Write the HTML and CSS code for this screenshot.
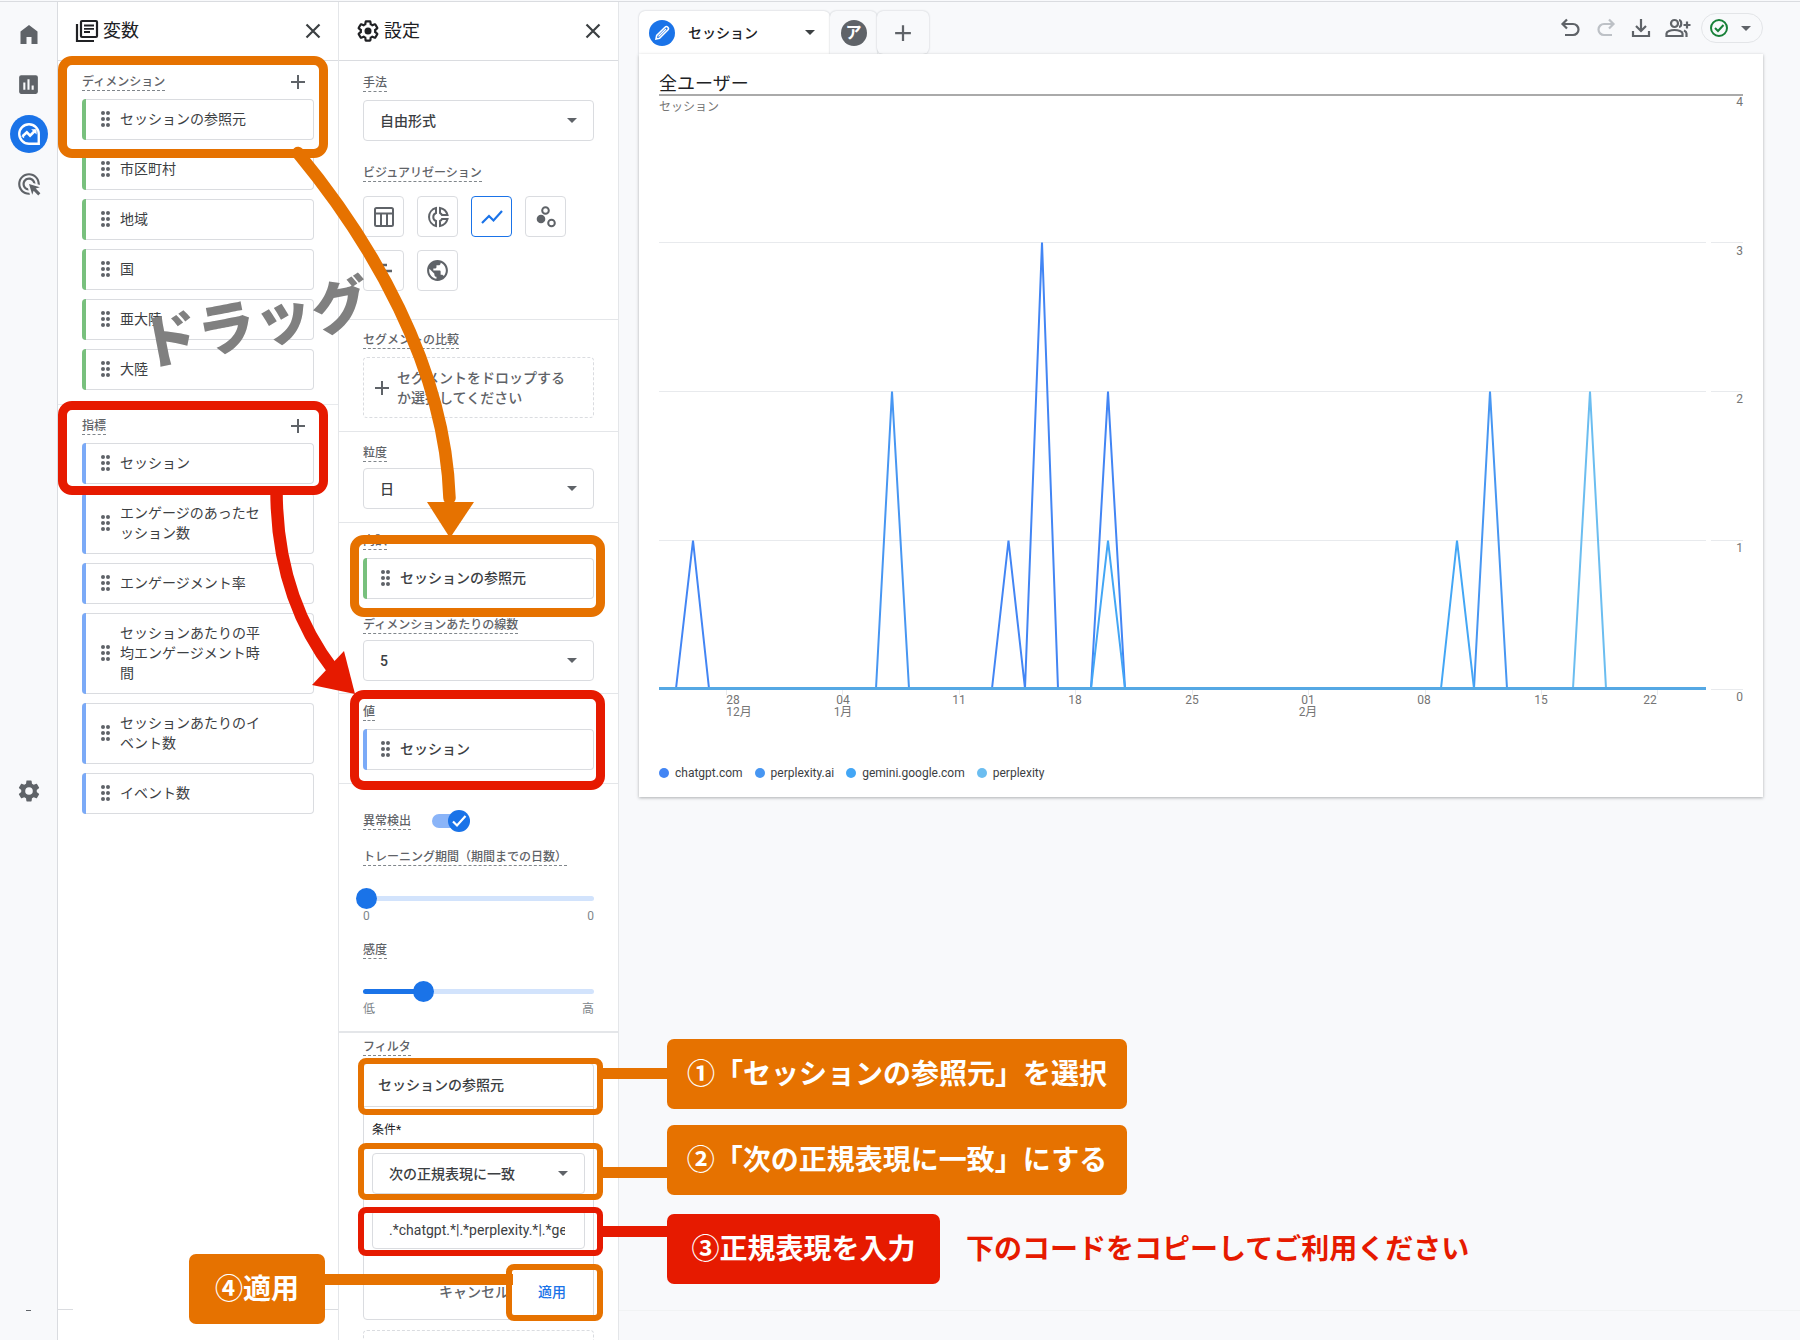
FILE: index.html
```html
<!DOCTYPE html>
<html lang="ja">
<head>
<meta charset="utf-8">
<title>データ探索</title>
<link rel="stylesheet" href="styles.css">
</head>
<body>
<svg class="defs" aria-hidden="true">
  <symbol id="grip" viewBox="0 0 10 16"><g fill="#5f6368"><circle cx="2" cy="2" r="2"/><circle cx="7" cy="2" r="2"/><circle cx="2" cy="8" r="2"/><circle cx="7" cy="8" r="2"/><circle cx="2" cy="14" r="2"/><circle cx="7" cy="14" r="2"/></g></symbol>
  <symbol id="plus" viewBox="0 0 16 16"><path d="M8 1v14M1 8h14" stroke="#5f6368" stroke-width="2" fill="none"/></symbol>
  <symbol id="close" viewBox="0 0 16 16"><path d="M1.500 1.500l13 13M14.500 1.500l-13 13" stroke="#3c4043" stroke-width="2.200" fill="none"/></symbol>
  <symbol id="gear" viewBox="0 0 24 24"><path d="M19.140 12.940c.04-.3.06-.61.06-.94 0-.32-.02-.64-.07-.94l2.030-1.580a.49.49 0 0 0 .12-.61l-1.920-3.320a.488.488 0 0 0-.59-.22l-2.390.96c-.5-.38-1.030-.7-1.620-.94l-.36-2.540a.484.484 0 0 0-.48-.41h-3.840c-.24 0-.43.17-.47.41l-.36 2.540c-.59.24-1.130.57-1.620.94l-2.390-.96c-.22-.08-.47 0-.59.22L2.740 8.870c-.12.21-.08.47.12.61l2.030 1.580c-.05.3-.09.63-.09.94s.02.64.07.94l-2.030 1.580a.49.49 0 0 0-.12.61l1.920 3.320c.12.22.37.29.59.22l2.390-.96c.5.38 1.030.7 1.620.94l.36 2.540c.05.24.24.41.48.41h3.840c.24 0 .44-.17.47-.41l.36-2.540c.59-.24 1.130-.56 1.620-.94l2.390.96c.22.08.47 0 .59-.22l1.920-3.320c.12-.22.07-.47-.12-.61z"/></symbol>
</svg>
<div class="page">
  <nav class="rail" aria-label="メイン">
    <a href="#home" class="rail-link" aria-label="ホーム"><svg width="24" height="24" viewBox="0 0 24 24"><path fill="#5f6368" d="M3.500 22V9.500L12 3l8.500 6.500V22h-6v-7h-5v7z"/></svg></a>
    <a href="#reports" class="rail-link" aria-label="レポート"><svg width="25" height="25" viewBox="0 0 24 24"><path fill="#5f6368" fill-rule="evenodd" d="M19 3H5a2 2 0 0 0-2 2v14c0 1.100.9 2 2 2h14a2 2 0 0 0 2-2V5a2 2 0 0 0-2-2zM9 17H7v-7h2zm4 0h-2V7h2zm4 0h-2v-4h2z"/></svg></a>
    <a href="#explore" class="rail-link rail-current" aria-label="探索"><svg width="26" height="26" viewBox="0 0 24 24" fill="none" stroke="#fff"><path stroke-width="2.200" d="M12 3a9 9 0 1 0 0 18h9v-9a9 9 0 0 0-9-9z"/><path stroke-width="2.400" d="M6 14l4-3.500 3 3L18 8.500"/><path fill="#fff" stroke="none" d="M14 7.500h5v5zM4.500 14h3v2z"/></svg></a>
    <a href="#ads" class="rail-link" aria-label="広告"><svg width="26" height="26" viewBox="0 0 24 24"><path fill="#5f6368" d="M11.710 17.990C8.530 17.840 6 15.220 6 12c0-3.310 2.690-6 6-6 3.220 0 5.840 2.530 5.990 5.710l-2.100-.63C15.480 9.310 13.890 8 12 8c-2.210 0-4 1.790-4 4 0 1.890 1.310 3.480 3.080 3.890l.63 2.100zM22 12c0 .3-.01.6-.04.9l-1.970-.59c.01-.1.01-.21.01-.31 0-4.420-3.580-8-8-8s-8 3.580-8 8 3.580 8 8 8c.1 0 .21 0 .31-.01l.59 1.970c-.3.030-.6.040-.9.040-5.520 0-10-4.480-10-10S6.480 2 12 2s10 4.480 10 10zm-3.770 4.260L22 15l-10-3 3 10 1.260-3.770 4.270 4.270 1.980-1.980-4.280-4.260z"/></svg></a>
    <a href="#admin" class="rail-link rail-admin" aria-label="管理"><svg width="26" height="26" viewBox="0 0 24 24" fill="#5f6368"><use href="#gear"/><circle cx="12" cy="12" r="3.500" fill="#f8f9fb"/></svg></a>
    <span class="rail-dash"></span>
  </nav>

  <section class="panel panel-vars" aria-label="変数">
    <header class="panel-head">
      <svg width="24" height="24" viewBox="0 0 24 24" fill="none" stroke="#202124" stroke-width="2.200"><path d="M2 5v17h17"/><rect x="6" y="2" width="16" height="16" rx="1"/><path stroke-width="1.800" d="M9 6.500h10M9 9.800h10M9 13h6"/></svg>
      <h2>変数</h2>
      <button class="icon-btn" aria-label="変数を閉じる"><svg width="16" height="16"><use href="#close"/></svg></button>
    </header>
    <div class="vars-group">
      <div class="group-head"><span class="label">ディメンション</span><button class="icon-btn" aria-label="ディメンションを追加"><svg width="16" height="16"><use href="#plus"/></svg></button></div>
      <ul class="chips">
        <li class="chip dim"><svg class="grip"><use href="#grip"/></svg><span>セッションの参照元</span></li>
        <li class="chip dim"><svg class="grip"><use href="#grip"/></svg><span>市区町村</span></li>
        <li class="chip dim"><svg class="grip"><use href="#grip"/></svg><span>地域</span></li>
        <li class="chip dim"><svg class="grip"><use href="#grip"/></svg><span>国</span></li>
        <li class="chip dim"><svg class="grip"><use href="#grip"/></svg><span>亜大陸</span></li>
        <li class="chip dim"><svg class="grip"><use href="#grip"/></svg><span>大陸</span></li>
      </ul>
    </div>
    <div class="vars-group">
      <div class="group-head"><span class="label">指標</span><button class="icon-btn" aria-label="指標を追加"><svg width="16" height="16"><use href="#plus"/></svg></button></div>
      <ul class="chips">
        <li class="chip met"><svg class="grip"><use href="#grip"/></svg><span>セッション</span></li>
        <li class="chip met"><svg class="grip"><use href="#grip"/></svg><span>エンゲージのあったセッション数</span></li>
        <li class="chip met"><svg class="grip"><use href="#grip"/></svg><span>エンゲージメント率</span></li>
        <li class="chip met"><svg class="grip"><use href="#grip"/></svg><span>セッションあたりの平均エンゲージメント時間</span></li>
        <li class="chip met"><svg class="grip"><use href="#grip"/></svg><span>セッションあたりのイベント数</span></li>
        <li class="chip met"><svg class="grip"><use href="#grip"/></svg><span>イベント数</span></li>
      </ul>
    </div>
    <div class="vars-foot"><span></span><span></span></div>
  </section>

  <section class="panel panel-settings" aria-label="設定">
    <header class="panel-head">
      <svg width="24" height="24" viewBox="0 0 24 24" fill="none" stroke="#202124" stroke-width="2.200"><use href="#gear"/><circle cx="12" cy="12" r="3.500" fill="#202124" stroke="none"/></svg>
      <h2>設定</h2>
      <button class="icon-btn" aria-label="設定を閉じる"><svg width="16" height="16"><use href="#close"/></svg></button>
    </header>

    <div class="sec sec-method">
      <label class="label" for="method">手法</label>
      <div class="select"><select id="method"><option>自由形式</option></select></div>
      <span class="label label-viz">ビジュアリゼーション</span>
      <div class="viz">
        <button aria-label="表"><svg width="22" height="22" viewBox="0 0 22 22" fill="none" stroke="#5f6368" stroke-width="2"><rect x="2" y="2" width="18" height="18" rx="1.500"/><path d="M2 7.500h18M8 7.500V20M14 7.500V20"/></svg></button>
        <button aria-label="ドーナツ グラフ"><svg width="22" height="22" viewBox="0 0 22 22" fill="none" stroke="#5f6368" stroke-width="2"><path d="M9 2a9.300 9.300 0 0 0 0 18v-5a4.300 4.300 0 0 1 0-8zM13 2v5a4.500 4.500 0 0 1 2 2h5.500A9.500 9.500 0 0 0 13 2zM13 20v-5a4.500 4.500 0 0 0 2-2h5.500A9.500 9.500 0 0 1 13 20z"/></svg></button>
        <button class="on" aria-label="折れ線グラフ"><svg width="22" height="22" viewBox="0 0 22 22" fill="none" stroke="#1a73e8" stroke-width="2.200"><path d="M1 17l7-7 4.500 4.500L21 5"/></svg></button>
        <button aria-label="散布図"><svg width="22" height="22" viewBox="0 0 22 22" fill="none" stroke="#5f6368" stroke-width="2"><circle cx="10.500" cy="4.500" r="3.300"/><circle cx="16.500" cy="17" r="3.300"/><circle cx="6" cy="13" r="4.300" fill="#5f6368" stroke="none"/></svg></button>
        <button aria-label="棒グラフ"><svg width="22" height="22" viewBox="0 0 22 22" fill="none" stroke="#5f6368" stroke-width="2.400"><path d="M9 5h5M9 11h10M9 17h3"/></svg></button>
        <button aria-label="地図"><svg width="25" height="25" viewBox="0 0 24 24" fill="#5f6368"><path d="M12 2C6.480 2 2 6.480 2 12s4.480 10 10 10 10-4.480 10-10S17.520 2 12 2zm-1 17.930c-3.950-.49-7-3.850-7-7.930 0-.62.08-1.210.21-1.790L9 15v1c0 1.100.9 2 2 2v1.930zm6.900-2.540c-.26-.81-1-1.390-1.900-1.390h-1v-3c0-.55-.45-1-1-1H8v-2h2c.55 0 1-.45 1-1V7h2c1.100 0 2-.9 2-2v-.41c2.930 1.190 5 4.060 5 7.410 0 2.080-.8 3.970-2.100 5.390z"/></svg></button>
      </div>
    </div>

    <div class="sec sec-segment">
      <span class="label">セグメントの比較</span>
      <button class="drop"><svg width="16" height="16"><use href="#plus"/></svg><span>セグメントをドロップするか選択してください</span></button>
    </div>

    <div class="sec sec-grain">
      <label class="label tight" for="grain">粒度</label>
      <div class="select"><select id="grain"><option>日</option></select></div>
    </div>

    <div class="sec sec-breakdown">
      <span class="label">内訳</span>
      <div class="chip dim"><svg class="grip"><use href="#grip"/></svg><span>セッションの参照元</span></div>
      <label class="label tight label-lines" for="lines">ディメンションあたりの線数</label>
      <div class="select"><select id="lines"><option>5</option></select></div>
    </div>

    <div class="sec sec-value">
      <span class="label">値</span>
      <div class="chip met"><svg class="grip"><use href="#grip"/></svg><span>セッション</span></div>
    </div>

    <div class="sec sec-anomaly">
      <div class="toggle-row">
        <label class="label" for="anomaly">異常検出</label>
        <span class="toggle"><input type="checkbox" id="anomaly" checked><svg width="22" height="22" viewBox="0 0 22 22" fill="none" stroke="#fff" stroke-width="2.200"><path d="M5 11.500l4 4L17.500 6"/></svg></span>
      </div>
      <label class="label label-range" for="training">トレーニング期間（期間までの日数）</label>
      <input type="range" id="training" class="range-zero" min="0" max="100" value="0">
      <div class="ends"><span>0</span><span>0</span></div>
      <label class="label label-range" for="sense">感度</label>
      <input type="range" id="sense" class="range-quarter" min="0" max="100" value="27">
      <div class="ends"><span>低</span><span>高</span></div>
    </div>

    <div class="sec sec-filter">
      <span class="label">フィルタ</span>
      <form class="filter">
        <button type="button" class="filter-field">セッションの参照元</button>
        <label class="filter-label" for="cond">条件*</label>
        <div class="select"><select id="cond"><option>次の正規表現に一致</option></select></div>
        <input type="text" class="filter-text" aria-label="正規表現" value=".*chatgpt.*|.*perplexity.*|.*gemini.*">
        <div class="filter-actions"><button type="button">キャンセル</button><button type="button" class="apply">適用</button></div>
      </form>
      <div class="drop-next"></div>
    </div>
  </section>

  <main class="main">
    <div class="topbar">
      <div class="tabs">
        <button class="tab tab-on"><span class="dot dot-blue"><svg width="16" height="16" viewBox="0 0 16 16" fill="none" stroke="#fff"><path stroke-width="1.600" d="M2 14l.7-3.500L11 2.200a1.500 1.500 0 0 1 2.800 2.800L5.500 13.300z"/><path stroke-width="1.200" d="M4.500 11.500L12 4"/></svg></span><span class="tab-name">セッション</span><i class="caret dark"></i></button>
        <button class="tab tab-two"><span class="dot dot-gray">ア</span></button>
        <button class="tab tab-add" aria-label="タブを追加"><svg width="18" height="18"><use href="#plus"/></svg></button>
      </div>
      <div class="tools">
        <button class="icon-btn" aria-label="元に戻す"><svg width="22" height="22" viewBox="0 0 22 22" fill="none" stroke="#5f6368" stroke-width="2.200"><path d="M7 2.500L2.500 7 7 11.500M2.500 7H13a5.500 5.500 0 0 1 0 11H5"/></svg></button>
        <button class="icon-btn" aria-label="やり直す"><svg width="22" height="22" viewBox="0 0 22 22" fill="none" stroke="#bdc1c6" stroke-width="2.200"><path d="M14 2.500L18.500 7 14 11.500M18.500 7H9a5.500 5.500 0 0 0 0 11h8"/></svg></button>
        <button class="icon-btn" aria-label="ダウンロード"><svg width="22" height="22" viewBox="0 0 22 22" fill="none" stroke="#5f6368" stroke-width="2.200"><path d="M11 2v12M6 9l5 5 5-5M3 14v5h16v-5"/></svg></button>
        <button class="icon-btn" aria-label="共有"><svg width="26" height="22" viewBox="0 0 26 22" fill="none" stroke="#5f6368" stroke-width="2.200"><circle cx="9.500" cy="6.500" r="3.500"/><path d="M1.500 19v-2.500c0-2 4-3.500 8-3.500s8 1.500 8 3.500V19zM14 3c3 .5 3 6.500 0 7M19 13.500c2 1 2.500 2 2.500 3V20M18.500 8h7M22 4.500v7"/></svg></button>
        <button class="status" aria-label="サンプリングなし"><svg width="20" height="20" viewBox="0 0 20 20" fill="none" stroke="#188038" stroke-width="2"><circle cx="10" cy="10" r="8"/><path d="M6 10l3 3 5.500-6"/></svg><i class="caret"></i></button>
      </div>
    </div>
    <section class="card">
      <h1>全ユーザー</h1>
      <p class="metric">セッション</p>
      <svg class="chart" viewBox="0 0 1084 610" role="img" aria-label="セッションの推移">
        <g stroke="#e8eaed"><path d="M0 126.500h1047M1052 126.500h32M0 275.500h1047M1052 275.500h32M0 424.500h1047M1052 424.500h32M1052 573.500h32"/><path d="M67.500 573v6M183.500 573v6M300.500 573v6M416.500 573v6M533.500 573v6M649.500 573v6M766.500 573v6M882.500 573v6M998.500 573v6"/></g>
        <g fill="none" stroke-width="2">
          <path stroke="#4285f4" d="M0 572.500h17L34 424.500 50 572.500h283L349.500 424.500 366 572.500 383 126.500 399 572.500h33L449 275.500 466 572.500h581"/>
          <path stroke="#4796f2" d="M0 572.500h217L233 275.500 250 572.500h565L831 275.500 848 572.500h199"/>
          <path stroke="#43a6f5" d="M0 572.500h432L449 424.500 466 572.500h316L798 424.500 815 572.500h232"/>
          <path stroke="#6bbdf0" d="M914 572.500L931 275.500 947 572.500"/>
          <path stroke="#55a8e4" stroke-width="3" d="M0 572.500h1047"/>
        </g>
        <g class="axis" text-anchor="end"><text x="1084" y="-10">4</text><text x="1084" y="139">3</text><text x="1084" y="287">2</text><text x="1084" y="436">1</text><text x="1084" y="585">0</text></g>
        <g class="axis" text-anchor="middle"><text x="74" y="588">28</text><text x="80" y="600">12月</text><text x="184" y="588">04</text><text x="184" y="600">1月</text><text x="300" y="588">11</text><text x="416" y="588">18</text><text x="533" y="588">25</text><text x="649" y="588">01</text><text x="649" y="600">2月</text><text x="765" y="588">08</text><text x="882" y="588">15</text><text x="991" y="588">22</text></g>
      </svg>
      <ul class="legend">
        <li><i class="k1"></i>chatgpt.com</li><li><i class="k2"></i>perplexity.ai</li><li><i class="k3"></i>gemini.google.com</li><li><i class="k4"></i>perplexity</li>
      </ul>
    </section>
    <div class="main-foot"></div>
  </main>

  <div class="notes">
    <div class="drag">ドラッグ</div>
    <svg class="arrows" width="660" height="1340" viewBox="0 0 660 1340" fill="none" stroke-width="12.500">
      <path stroke="#e67200" stroke-linecap="round" d="M298 153C370 240 445 365 449.500 498"/>
      <path fill="#e67200" d="M427 502h47l-24 36z"/>
      <path stroke="#e61a00" d="M276.500 490C276.500 560 296 622 334 671"/>
      <path fill="#e61a00" d="M344 651l11 43-43-9z"/>
    </svg>
    <div class="ring ring-dim"></div>
    <div class="ring ring-met red"></div>
    <div class="ring ring-breakdown"></div>
    <div class="ring ring-value red"></div>
    <div class="wire wire-field"></div>
    <div class="wire wire-cond"></div>
    <div class="wire wire-regex red"></div>
    <div class="ring thin ring-field"></div>
    <div class="ring thin ring-cond"></div>
    <div class="ring thin ring-regex red"></div>
    <div class="ring thin ring-apply"></div>
    <div class="wire wire-apply"></div>
    <div class="callout call-one">①「セッションの参照元」を選択</div>
    <div class="callout call-two">②「次の正規表現に一致」にする</div>
    <div class="callout call-three red">③正規表現を入力</div>
    <div class="callout call-four">④適用</div>
    <div class="hint">下のコードをコピーしてご利用ください</div>
  </div>
</div>
</body>
</html>
```
FILE: styles.css
```css
* { box-sizing: border-box; }
body {
  margin: 0;
  padding-top: 1px;
  background: #f8f9fb;
  color: #3c4043;
  font: 500 14px/20px Roboto, "Noto Sans CJK JP", sans-serif;
}
h1, h2, p, ul { margin: 0; padding: 0; font-weight: 400; }
ul { list-style: none; }
svg { display: block; flex: none; }
button, input, select { font: inherit; color: inherit; margin: 0; }
button { padding: 0; border: 0; background: none; }
.defs { position: absolute; width: 0; height: 0; }

.page {
  position: relative;
  display: flex;
  min-height: 1339px;
  border-top: 1px solid #dadce0;
  overflow: hidden;
}

/* navigation rail */
.rail {
  width: 58px;
  flex: none;
  display: flex;
  flex-direction: column;
  align-items: center;
  gap: 12px;
  padding-top: 13px;
  border-right: 1px solid #dadce0;
}
.rail-link {
  width: 38px;
  height: 38px;
  display: grid;
  place-items: center;
  border-radius: 50%;
}
.rail-current { background: #1a73e8; }
.rail-admin { margin-top: 557px; }
.rail-dash { width: 5px; height: 1px; margin-top: 488px; background: #5f6368; }

/* side panels */
.panel { flex: none; display: flex; flex-direction: column; background: #fff; height: 1338px; overflow: hidden; }
.panel-vars { width: 281px; border-right: 1px solid #e4e6e9; }
.panel-settings { width: 280px; border-right: 1px solid #e4e6e9; }
.panel-head {
  flex: none;
  height: 59px;
  display: flex;
  align-items: center;
  gap: 4px;
  padding: 0 17px;
  border-bottom: 1px solid #dadce0;
  color: #202124;
}
.panel-head h2 { font-size: 18px; line-height: 24px; }
.panel-head .icon-btn { margin-left: auto; }
.icon-btn { display: grid; place-items: center; }
.label {
  display: block;
  width: max-content;
  margin-bottom: 8px;
  padding-top: 2px;
  border-bottom: 1px dashed #80868b;
  color: #5f6368;
  font-size: 12px;
  line-height: 16px;
}
.label.tight { margin-bottom: 6px; }

.vars-group { padding: 11px 24px 14px; border-bottom: 1px solid #e8eaed; }
.vars-group + .vars-group { border-bottom: 0; }
.group-head { display: flex; justify-content: space-between; align-items: center; margin-bottom: 8px; padding-right: 8px; }
.group-head .label { margin: 0; }
.chips { display: grid; gap: 9px; }
.chip {
  position: relative;
  display: flex;
  align-items: center;
  gap: 9px;
  padding: 9px 45px 10px 19px;
  border: 1px solid #dadce0;
  border-left: 0;
  border-radius: 4px;
}
.chip::before { content: ""; position: absolute; inset: -1px auto -1px 0; width: 4px; border-radius: 4px 0 0 4px; }
.dim::before { background: #78c07d; }
.met::before { background: #7baaf7; }
.grip { width: 10px; height: 16px; }
.sec .chip { padding-left: 18px; padding-right: 20px; }
.vars-foot { margin-top: auto; margin-bottom: 30px; display: flex; justify-content: space-between; }
.vars-foot span { width: 15px; height: 1px; background: #dadce0; }

/* settings sections */
.sec { padding: 8px 24px 13px; border-bottom: 1px solid #e4e6e9; }
.sec-method { padding-top: 12px; padding-bottom: 28px; }
.sec-segment { padding-top: 10px; }
.sec-grain { padding-top: 11px; }
.sec-breakdown { padding-bottom: 12px; }
.sec-anomaly { padding-top: 27px; padding-bottom: 15px; border-bottom-width: 2px; }
.sec-filter { padding-top: 4px; border: 0; }
.select { position: relative; }
.select select {
  display: block;
  width: 100%;
  height: 41px;
  padding: 0 16px;
  border: 1px solid #dadce0;
  border-radius: 4px;
  background: #fff;
  appearance: none;
}
.select::after, .caret {
  border: 5px solid transparent;
  border-top-color: #5f6368;
  border-bottom: 0;
}
.select::after { content: ""; position: absolute; right: 17px; top: 18px; }
.caret.dark { border-top-color: #3c4043; }
.label-viz { margin-top: 22px; margin-bottom: 14px; }
.viz { display: flex; flex-wrap: wrap; gap: 13px; }
.viz button { width: 41px; height: 41px; display: grid; place-items: center; border: 1px solid #dadce0; border-radius: 4px; }
.viz .on { border-color: #1a73e8; }
.drop {
  width: 100%;
  height: 61px;
  display: flex;
  align-items: center;
  gap: 7px;
  padding: 0 20px 0 10px;
  border: 1px dashed #dadce0;
  border-radius: 4px;
  color: #5f6368;
  text-align: left;
}
.label-lines { margin-top: 16px; }

.toggle-row { display: flex; gap: 21px; align-items: center; }
.toggle-row .label { margin: 0; }
.toggle { position: relative; width: 38px; height: 19px; }
.toggle input { appearance: none; display: block; width: 36px; height: 14px; margin: 3px 0; border-radius: 7px; background: #8ab4f8; }
.toggle svg { position: absolute; right: 0; top: -1px; border-radius: 50%; background: #1a73e8; pointer-events: none; }
.label-range { margin-top: 17px; margin-bottom: 21px; }
input[type=range] { appearance: none; display: block; width: calc(100% + 7px); height: 22px; margin: 0 0 0 -7px; background: none; }
input[type=range]::-webkit-slider-runnable-track { height: 5px; margin: 0 0 0 7px; border-radius: 3px; background: #d2e3fc; }
input[type=range]::-webkit-slider-thumb { appearance: none; width: 21px; height: 21px; margin: -8px 0 0 -7px; border-radius: 50%; background: #1a73e8; }
input.range-quarter::-webkit-slider-runnable-track { background: linear-gradient(90deg, #1a73e8 25%, #d2e3fc 25%); }
.ends { display: flex; justify-content: space-between; color: #80868b; font-size: 12px; line-height: 14px; font-weight: 400; }

.filter { height: 257px; margin-top: -1px; padding: 0 8px; border: 1px solid #dadce0; border-radius: 4px; }
.filter-field { display: block; width: calc(100% + 16px); height: 43px; margin: 0 -8px; padding: 0 14px; border-bottom: 1px solid #dadce0; text-align: left; }
.filter-label { display: block; margin: 14px 0; font-size: 12px; line-height: 18px; font-weight: 400; color: #202124; }
.filter-text { display: block; width: 100%; height: 39px; margin-top: 16px; padding: 0 19px 0 16px; border: 1px solid #dadce0; border-radius: 4px; background: #fff; font-weight: 400; }
.filter-actions { display: flex; justify-content: flex-end; gap: 29px; margin-top: 33px; padding-right: 19px; color: #5f6368; }
.filter-actions .apply { color: #1a73e8; }
.drop-next { height: 40px; margin-top: 10px; border: 1px dashed #dadce0; border-radius: 4px; }

/* report area */
.main { flex: 1; min-width: 0; display: flex; flex-direction: column; padding: 9px 37px 0 20px; }
.topbar { display: flex; justify-content: space-between; height: 43px; }
.tabs { display: flex; }
.tab { display: flex; align-items: center; justify-content: center; border-radius: 6px 6px 0 0; background: #f8f9fb; box-shadow: 0 0 2px #bdc1c6; }
.tab-on { width: 191px; justify-content: flex-start; padding: 0 15px 0 10px; background: #fff; color: #202124; }
.tab-name { margin-left: 13px; }
.tab-on .caret { margin-left: auto; }
.tab-two { width: 47px; }
.tab-add { width: 52px; border-radius: 6px; }
.dot { width: 26px; height: 26px; display: grid; place-items: center; border-radius: 50%; color: #fff; font-size: 16px; font-weight: 700; }
.dot-blue { background: #1a73e8; }
.dot-gray { background: #5f6368; }
.tools { display: flex; align-items: center; gap: 13px; height: 34px; }
.status { display: flex; align-items: center; gap: 12px; width: 62px; height: 30px; margin-left: -3px; padding-left: 7px; border: 1px solid #e3e5e8; border-radius: 15px; }
.card { position: relative; padding: 14px 20px; background: #fff; box-shadow: 0 1px 3px rgba(60, 64, 67, .4); }
.card h1 { height: 28px; border-bottom: 2px solid #aaa; color: #202124; font-size: 18px; line-height: 32px; }
.metric { height: 20px; color: #757575; font-size: 12px; line-height: 22px; font-weight: 400; }
.chart { width: 100%; height: auto; overflow: visible; }
.axis { fill: #757575; font-size: 12px; font-weight: 400; }
.legend { display: flex; gap: 12px; margin-top: 36px; height: 21px; align-items: center; color: #3c4043; font-size: 12px; font-weight: 400; }
.legend li { display: flex; align-items: center; gap: 6px; }
.legend i { width: 10px; height: 10px; border-radius: 50%; }
.k1 { background: #4285f4; }
.k2 { background: #4796f2; }
.k3 { background: #43a6f5; }
.k4 { background: #6bbdf0; }
.main-foot { margin: auto -37px 29px -20px; height: 1px; background: #f1f3f4; }

/* tutorial annotations over the interface */
.notes { position: absolute; inset: -2px 0 0; pointer-events: none; }
.notes > * { position: absolute; }
.arrows { left: 0; top: 0; }
.drag { left: 139px; top: 284px; color: #808080; font-size: 58px; line-height: 80px; font-weight: 900; transform: rotate(-11deg); }
.ring { border: 9px solid #e67200; border-radius: 14px; }
.ring.thin { border-width: 6px; border-radius: 8px; }
.ring.red { border-color: #e61a00; }
.ring-dim { left: 58px; top: 56px; width: 270px; height: 102px; }
.ring-met { left: 58px; top: 401px; width: 270px; height: 94px; }
.ring-breakdown { left: 350px; top: 535px; width: 255px; height: 82px; }
.ring-value { left: 350px; top: 690px; width: 255px; height: 100px; }
.ring-field { left: 358px; top: 1058px; width: 245px; height: 57px; }
.ring-cond { left: 358px; top: 1143px; width: 245px; height: 57px; }
.ring-regex { left: 358px; top: 1207px; width: 245px; height: 49px; }
.ring-apply { left: 506px; top: 1264px; width: 97px; height: 57px; background: none; }
.wire { left: 600px; width: 70px; height: 11px; background: #e67200; }
.wire.red { background: #e61a00; }
.wire-field { top: 1068px; }
.wire-cond { top: 1167px; }
.wire-regex { top: 1226px; }
.wire-apply { left: 320px; top: 1274px; width: 193px; }
.callout {
  display: flex;
  align-items: center;
  justify-content: center;
  height: 70px;
  padding-bottom: 4px;
  border-radius: 7px;
  background: #e67200;
  color: #fff;
  font: 700 28px/40px "Noto Sans CJK JP", sans-serif;
}
.callout.red { background: #e61a00; }
.call-one { left: 667px; top: 1039px; width: 460px; }
.call-two { left: 667px; top: 1125px; width: 460px; }
.call-three { left: 667px; top: 1214px; width: 273px; }
.call-four { left: 189px; top: 1254px; width: 136px; }
.hint { left: 966px; top: 1227px; color: #e61a00; font: 700 28px/40px "Noto Sans CJK JP", sans-serif; white-space: nowrap; }
```
